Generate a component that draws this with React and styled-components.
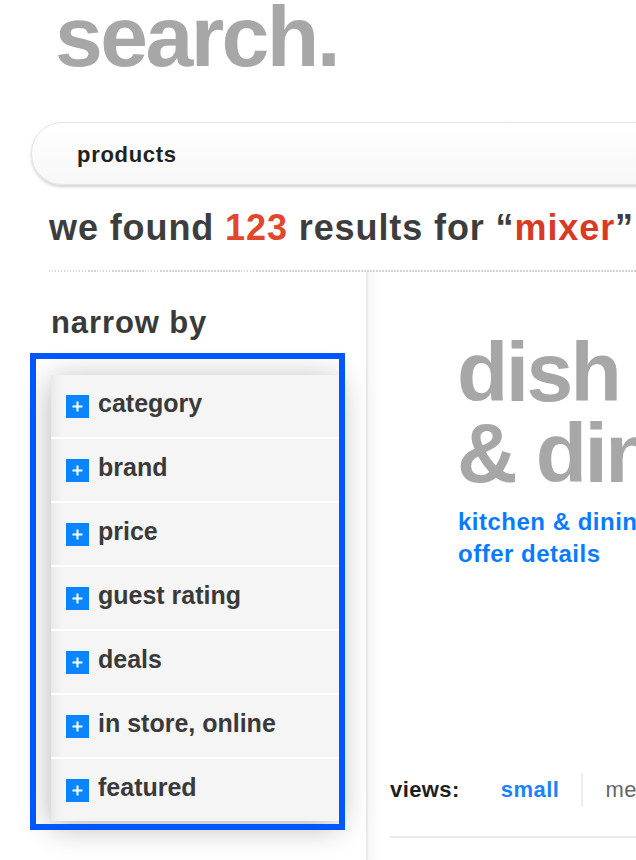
import React from "react";
import styled, { createGlobalStyle } from "styled-components";

const Global = createGlobalStyle`
  html, body { margin: 0; padding: 0; background: #fff; overflow: hidden; }
  body { font-family: "Liberation Sans", Arial, Helvetica, sans-serif; }
  * { box-sizing: border-box; }
`;

const Page = styled.div`
  position: relative;
  width: 636px;
  height: 860px;
  overflow: hidden;
  background: #fff;
  font-family: "Liberation Sans", Arial, Helvetica, sans-serif;
  font-weight: 700;
`;

const Title = styled.h1`
  margin: 0;
  padding-left: 55px;
  font-size: 86px;
  line-height: 72px;
  letter-spacing: -2.6px;
  color: #a7a7a7;
  font-weight: 700;
  white-space: nowrap;
`;

const SearchBar = styled.div`
  margin: 50px 0 0 31px;
  width: 700px;
  height: 63px;
  border-radius: 31px;
  border: 1px solid #e4e4e4;
  background: linear-gradient(#ffffff, #f7f7f7);
  box-shadow: 0 2px 3px rgba(0, 0, 0, 0.18);
  display: flex;
  align-items: center;
  padding-left: 45px;
  padding-top: 2px;
`;

const Scope = styled.span`
  font-size: 22px;
  letter-spacing: 0.7px;
  color: #222;
`;

const Results = styled.h2`
  margin: 21px 0 0;
  padding-left: 49px;
  font-size: 36px;
  line-height: 44px;
  letter-spacing: 0.9px;
  color: #3d3d3d;
  white-space: nowrap;
`;

const Hit = styled.span`
  color: ${(p) => p.$tone};
`;

const DottedRule = styled.div`
  margin: 20px 0 0 49px;
  height: 2px;
  background-image: repeating-linear-gradient(
    to right,
    #d4d4d4 0 1.5px,
    transparent 1.5px 3px
  );
`;

const Columns = styled.div`
  display: grid;
  grid-template-columns: 368px 1fr;
  height: 600px;
`;

const Sidebar = styled.aside`
  border-right: 2px solid #ebebeb;
  padding-top: 32px;
`;

const SideHeading = styled.h3`
  margin: 0;
  padding-left: 51px;
  font-size: 31px;
  line-height: 37px;
  letter-spacing: 0.9px;
  color: #3a3a3a;
`;

const FilterPanel = styled.ul`
  list-style: none;
  margin: 34px 0 0 51px;
  padding: 0;
  width: 288px;
  background: #f5f5f5;
  box-shadow: 0 5px 30px rgba(0, 0, 0, 0.3), inset 12px 0 14px -12px rgba(0, 0, 0, 0.1);
`;

const FilterRow = styled.li`
  height: ${(p) => (p.$first ? 62 : 64)}px;
  border-top: ${(p) => (p.$first ? "none" : "2px solid #ffffff")};
  display: flex;
  align-items: center;
  gap: 9px;
  padding-left: 15px;
`;

const PlusBox = styled.span`
  width: 23px;
  height: 23px;
  background: #0a84ff;
  display: flex;
  align-items: center;
  justify-content: center;
  flex: none;
`;

const FilterLabel = styled.span`
  font-size: 25px;
  color: #3a3a3a;
  padding-bottom: 5px;
  white-space: nowrap;
`;

const Highlight = styled.div`
  position: absolute;
  left: 30px;
  top: 353px;
  width: 315px;
  height: 477px;
  border: 6px solid #0057ff;
  pointer-events: none;
`;

const Main = styled.section`
  background: linear-gradient(to right, rgba(0, 0, 0, 0.035), rgba(0, 0, 0, 0) 14px);
  padding-top: 60px;
  display: flex;
  flex-direction: column;
  min-width: 0;
`;

const Promo = styled.h2`
  margin: 0;
  padding-left: 89px;
  font-size: 84px;
  line-height: 81px;
  letter-spacing: -2.6px;
  color: #a7a7a7;
  white-space: nowrap;
`;

const PromoLinks = styled.div`
  margin-top: 12px;
  padding-left: 90px;
  display: flex;
  flex-direction: column;
`;

const PromoLink = styled.a`
  font-size: 24px;
  line-height: 32px;
  color: #0a7bff;
  text-decoration: none;
  white-space: nowrap;
  letter-spacing: 0.5px;
`;

const ViewsBar = styled.div`
  margin-top: 203px;
  padding-left: 22px;
  height: 34px;
  display: flex;
  align-items: center;
  white-space: nowrap;
`;

const ViewsLabel = styled.span`
  font-size: 22px;
  color: #1e1e1e;
  margin-right: 41px;
  letter-spacing: 0.4px;
`;

const ViewOption = styled.span`
  font-size: 22px;
  letter-spacing: 0.5px;
  color: ${(p) => (p.$active ? "#1a82ff" : "#666")};
  font-weight: ${(p) => (p.$active ? 700 : 400)};
`;

const ViewSep = styled.span`
  width: 2px;
  height: 34px;
  background: #ececec;
  margin: 0 22px;
  flex: none;
`;

const BottomRule = styled.div`
  margin: 29px 0 0 22px;
  height: 2px;
  background: #e8e8e8;
`;

const Plus = () => (
  <svg width="13" height="13" viewBox="0 0 13 13">
    <path d="M6.5 1.5v10M1.5 6.5h10" stroke="#fff" strokeWidth="2" />
  </svg>
);

const filters = [
  "category",
  "brand",
  "price",
  "guest rating",
  "deals",
  "in store, online",
  "featured",
];

export default function App() {
  return (
    <>
      <Global />
      <Page>
        <Title>search.</Title>
        <SearchBar>
          <Scope>products</Scope>
        </SearchBar>
        <Results>
          we found <Hit $tone="#e2472b">123</Hit> results for “<Hit $tone="#d83a26">mixer</Hit>”
        </Results>
        <DottedRule />
        <Columns>
          <Sidebar>
            <SideHeading>narrow by</SideHeading>
            <FilterPanel>
              {filters.map((f, i) => (
                <FilterRow key={f} $first={i === 0}>
                  <PlusBox>
                    <Plus />
                  </PlusBox>
                  <FilterLabel>{f}</FilterLabel>
                </FilterRow>
              ))}
            </FilterPanel>
          </Sidebar>
          <Main>
            <Promo>
              dish
              <br />
              &amp; dining
            </Promo>
            <PromoLinks>
              <PromoLink href="#">kitchen &amp; dining</PromoLink>
              <PromoLink href="#">offer details</PromoLink>
            </PromoLinks>
            <ViewsBar>
              <ViewsLabel>views:</ViewsLabel>
              <ViewOption $active>small</ViewOption>
              <ViewSep />
              <ViewOption>medium</ViewOption>
            </ViewsBar>
            <BottomRule />
          </Main>
        </Columns>
        <Highlight />
      </Page>
    </>
  );
}
